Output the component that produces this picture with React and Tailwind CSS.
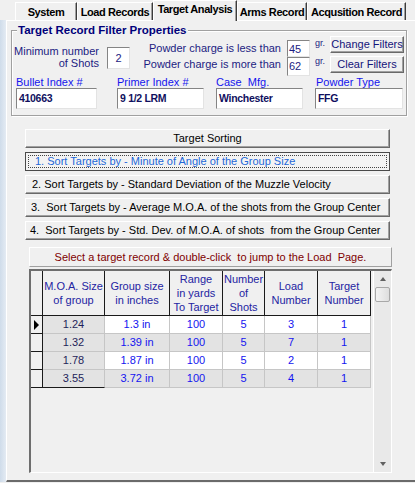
import React from 'react';

const sans = "font-['Liberation_Sans',Arial,sans-serif]";

const raised =
  'border border-t-white border-l-white border-r-[#696969] border-b-[#696969] shadow-[inset_-1px_-1px_0_#a0a0a0] bg-[#f0f0f0]';
const sunken =
  'border border-t-[#848484] border-l-[#848484] border-r-[#e3e3e3] border-b-[#e3e3e3] bg-white';

const tabs = [
  { label: 'System', width: 'w-[62px]' },
  { label: 'Load Records', width: 'w-[76px]' },
  { label: 'Target Analysis', width: 'w-[84px]', active: true },
  { label: 'Arms Record', width: 'w-[70px]' },
  { label: 'Acqusition Record', width: 'w-[99px]' },
];

const fields = [
  { label: 'Bullet Index #', value: '410663', box: 'ml-[4px] w-[81px]' },
  { label: 'Primer Index #', value: '9 1/2 LRM', box: 'ml-[20px] w-[87px]' },
  { label: 'Case  Mfg.', value: 'Winchester', box: 'ml-[12px] w-[87px]' },
  { label: 'Powder Type', value: 'FFG', box: 'ml-[12px] w-[88px]', pad: 'pl-[1px]' },
];

const sorts = [
  { text: '1. Sort Targets by - Minute of Angle of the Group Size', pad: 'pl-[6px]', focused: true },
  { text: '2. Sort Targets by - Standard Deviation of the Muzzle Velocity', pad: 'pl-[6px]' },
  { text: '3.  Sort Targets by - Average M.O.A. of the shots from the Group Center', pad: 'pl-[5px]' },
  { text: '4.  Sort Targets by - Std. Dev. of M.O.A. of shots  from the Group Center', pad: 'pl-[4px]' },
];

const cols = [
  { w: 'w-[62px]', head: ['M.O.A. Size', 'of group'] },
  { w: 'w-[65px]', head: ['Group size', 'in inches'] },
  { w: 'w-[53px]', head: ['Range', 'in yards', 'To Target'] },
  { w: 'w-[42px]', head: ['Number', 'of', 'Shots'] },
  { w: 'w-[53px]', head: ['Load', 'Number'] },
  { w: 'w-[53px]', head: ['Target', 'Number'] },
];

const rows = [
  ['1.24', '1.3 in', '100', '5', '3', '1'],
  ['1.32', '1.39 in', '100', '5', '7', '1'],
  ['1.78', '1.87 in', '100', '5', '2', '1'],
  ['3.55', '3.72 in', '100', '5', '4', '1'],
];

function Tab({ label, width, active }) {
  const text = 'font-bold text-[11px] leading-[14px] tracking-[-0.4px] whitespace-nowrap text-black';
  if (active) {
    return (
      <div
        className={`${width} h-[21px] relative z-10 bg-[#f0f0f0] border-t border-l border-t-white border-l-white border-r border-r-[#3c3c3c] shadow-[inset_-1px_0_0_#a0a0a0] flex justify-center pt-[1px]`}
      >
        <span className={text}>{label}</span>
      </div>
    );
  }
  return (
    <div
      className={`${width} h-[18px] mt-[2px] border-t border-l border-t-white border-l-white border-r border-r-[#3c3c3c] shadow-[inset_-1px_0_0_#a0a0a0] flex justify-center pt-[2px]`}
    >
      <span className={text}>{label}</span>
    </div>
  );
}

function Scrollbar() {
  return (
    <div className="w-[18px] ml-[2px] h-full bg-[#e9e9e9] border-l border-l-white flex flex-col items-center">
      <svg width="6" height="4" viewBox="0 0 6 4" className="mt-[6px]">
        <polygon points="3,0 6,4 0,4" fill="#606060" />
      </svg>
      <div className="mt-[6px] w-[15px] h-[15px] rounded-[2px] border border-[#a8a8a8] bg-gradient-to-r from-[#f4f4f4] to-[#dedede]" />
      <div className="flex-1" />
      <svg width="6" height="4" viewBox="0 0 6 4" className="mb-[6px]">
        <polygon points="0,0 6,0 3,4" fill="#606060" />
      </svg>
    </div>
  );
}

function Grid() {
  return (
    <div className="ml-[22px] mt-[2px] w-[363px] h-[204px] border-l-2 border-t-2 border-l-[#6e6e6e] border-t-[#6e6e6e] border-r border-b border-r-white border-b-white flex bg-[#f0f0f0]">
      <div className="w-[340px] h-full flex flex-col">
        <div className="flex h-[45px] border-b border-b-[#1a1a1a]">
          <div className="w-[12px] h-full border-r border-r-[#1a1a1a]" />
          {cols.map((c, i) => (
            <div
              key={i}
              className={`${c.w} h-full border-r border-r-[#1a1a1a] flex flex-col items-center justify-center leading-[14px] text-[11px] text-[#2424a2]`}
            >
              {c.head.map((h, j) => (
                <span key={j} className="whitespace-nowrap">{h}</span>
              ))}
            </div>
          ))}
        </div>
        {rows.map((r, ri) => (
          <div key={ri} className="flex h-[18px]">
            <div className="w-[12px] h-full border-r border-b border-[#1a1a1a] bg-[#f0f0f0] flex items-center pl-[3px]">
              {ri === 0 && (
                <svg width="5" height="10" viewBox="0 0 5 10">
                  <polygon points="0,0 5,5 0,10" fill="#000" />
                </svg>
              )}
            </div>
            {r.map((v, ci) => {
              const first = ci === 0;
              const bg = first || ri % 2 === 1 ? 'bg-[#e3e3e3]' : 'bg-white';
              const bottom = first && ri === rows.length - 1 ? 'border-b-[#1a1a1a]' : 'border-b-[#c6c6c6]';
              const color = first ? 'text-[#1f1f5a]' : 'text-[#1414f0]';
              return (
                <div
                  key={ci}
                  className={`${cols[ci].w} h-full border-r border-b border-r-[#c6c6c6] ${bottom} ${bg} ${color} flex items-center justify-center text-[11px]`}
                >
                  {v}
                </div>
              );
            })}
          </div>
        ))}
      </div>
      <Scrollbar />
    </div>
  );
}

export default function App() {
  return (
    <div className={`${sans} w-[415px] h-[483px] bg-[#f0f0f0] flex flex-col overflow-hidden text-[11px]`}>
      <div className="h-[20px] flex items-start pl-[15px] shrink-0">
        {tabs.map((t) => (
          <Tab key={t.label} {...t} />
        ))}
      </div>

      <div className="flex-1 flex mb-[1px]">
        <div className="w-[6px] bg-gradient-to-r from-[#cfdcea] to-[#e4ebf3]" />
        <div className="flex-1 border-l border-t border-b-2 border-l-white border-t-white border-b-[#6b6b6b] flex flex-col">
          <fieldset className="ml-[4px] mt-[2px] w-[396px] border border-[#a0a0a0] shadow-[inset_1px_1px_0_#fff,1px_1px_0_#fff] pb-[6px]">
            <legend className="ml-[5px] px-[1px] bg-[#f0f0f0] font-bold text-[11.5px] leading-[14px] text-[#00007a]">
              Target Record Filter Properties
            </legend>

            <div className="-mt-[1px] flex items-start h-[40px]">
              <div className="w-[87px] mt-[9px] text-right leading-[12px] text-[#1c1c82]">
                <div>Minimum number</div>
                <div>of Shots</div>
              </div>
              <div className={`${sunken} ml-[8px] mt-[11px] w-[23px] h-[22px] flex items-center justify-center text-[#1c1c82]`}>
                2
              </div>
              <div className="w-[151px] mt-[4px] text-right leading-[16px] text-[#1c1c82]">
                <div>Powder charge is less than</div>
                <div>Powder charge is more than</div>
              </div>
              <div className="ml-[6px] mt-[4px] w-[23px] flex flex-col">
                <div className={`${sunken} h-[17px] flex items-end pl-[1px] leading-[13px] text-[#1c1c82]`}>45</div>
                <div className={`${sunken} h-[19px] flex items-end pl-[1px] pb-[2px] leading-[13px] text-[#1c1c82]`}>62</div>
              </div>
              <div className="ml-[5px] w-[10px] mt-[2px] flex flex-col text-[9px] leading-[10px] text-[#1c1c82]">
                <span>gr.</span>
                <span className="mt-[8px]">gr.</span>
              </div>
              <div className="ml-[5px] w-[74px] flex flex-col gap-[3px]">
                <button className={`${raised} h-[17px] text-[11px] leading-[13px] text-[#14147a]`}>Change Filters</button>
                <button className={`${raised} h-[17px] text-[11px] leading-[13px] text-[#14147a]`}>Clear Filters</button>
              </div>
            </div>

            <div className="flex">
              {fields.map((f) => (
                <div key={f.label} className={`${f.box} flex flex-col`}>
                  <span className={`leading-[12px] whitespace-pre text-[#1515ee] ${f.pad || ''}`}>{f.label}</span>
                  <div className={`${sunken} h-[21px] flex items-center pl-[2px] font-bold text-[10.5px] tracking-[-0.3px] whitespace-nowrap text-[#0f0f5e]`}>
                    {f.value}
                  </div>
                </div>
              ))}
            </div>
          </fieldset>

          <div className="ml-[18px] mt-[13px] w-[365px] flex flex-col gap-[4px]">
            <button className={`${raised} h-[19px] text-[11px] text-black`}>Target Sorting</button>
            {sorts.map((s) =>
              s.focused ? (
                <button
                  key={s.text}
                  className="h-[19px] border border-[#4a4a4a] bg-[#f3f3f3] p-[2px] flex"
                >
                  <span className={`flex-1 border border-dotted border-[#444] flex items-center ${s.pad} whitespace-pre text-[11px] text-[#2468d8]`}>
                    {s.text}
                  </span>
                </button>
              ) : (
                <button
                  key={s.text}
                  className={`${raised} h-[19px] flex items-center ${s.pad} whitespace-pre text-[11px] text-black`}
                >
                  {s.text}
                </button>
              )
            )}
          </div>

          <div className="ml-[22px] mt-[7px] w-[363px] h-[20px] border border-t-white border-l-white border-r-[#a0a0a0] border-b-[#a0a0a0] flex items-center justify-center whitespace-pre text-[11px] text-[#800000]">
            Select a target record &amp; double-click  to jump to the Load  Page.
          </div>

          <Grid />
        </div>
      </div>
    </div>
  );
}
